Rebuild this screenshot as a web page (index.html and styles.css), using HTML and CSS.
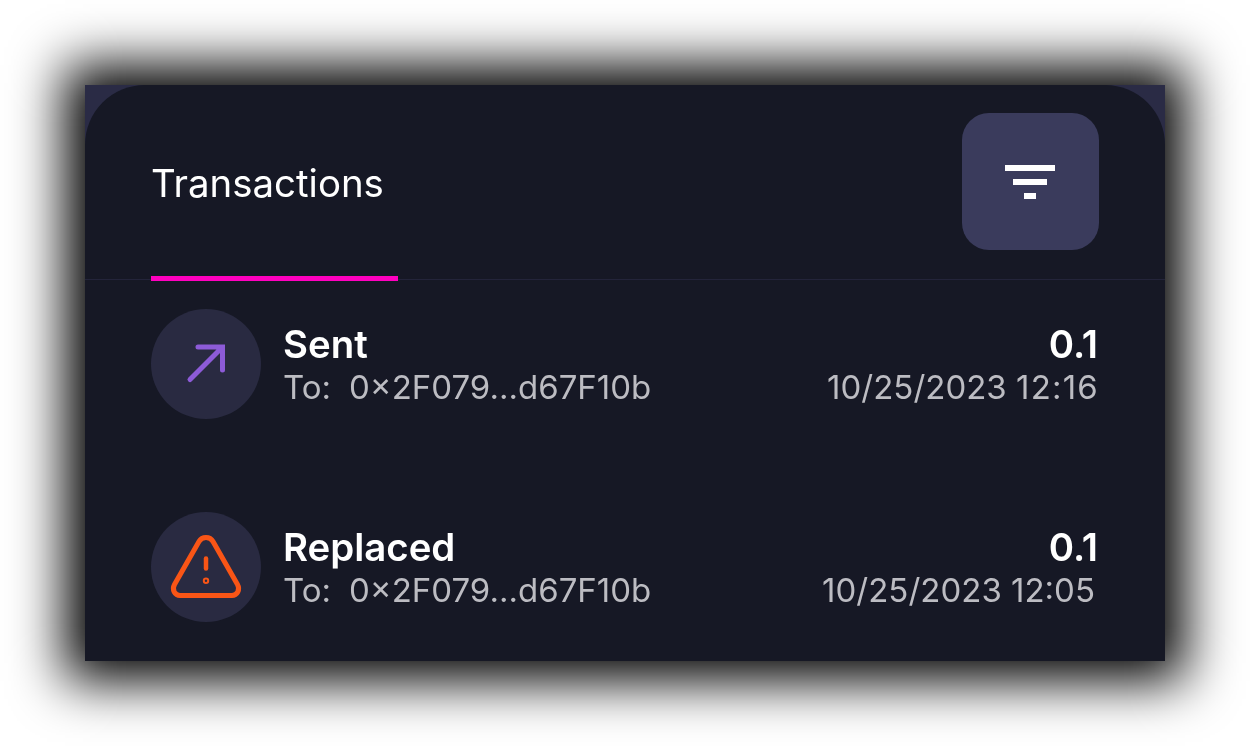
FILE: index.html
```html
<!DOCTYPE html>
<html lang="en">
<head>
<meta charset="utf-8">
<title>Transactions</title>
<link rel="stylesheet" href="styles.css">
</head>
<body>
<main class="frame">
  <section class="panel">
    <header class="head">
      <div class="tab"><span class="txt">Transactions</span></div>
      <button class="filter" type="button" aria-label="Filter">
        <svg width="50" height="34" viewBox="0 0 50 34"><path d="M0 0H50V6H0ZM8 14H42V20H8ZM19 28H31V34H19Z" fill="#fff"/></svg>
      </button>
    </header>
    <ul class="list">
      <li class="row">
        <span class="badge">
          <svg width="110" height="110" viewBox="0 0 110 110" fill="none" stroke="#8d5bd8" stroke-width="5" stroke-linecap="round"><path d="M39 70.500L71 38.500M47 38H71.500V61"/></svg>
        </span>
        <div class="info">
          <div class="title">Sent</div>
          <div class="sub"><span class="to">To:</span>0×2F079...d67F10b</div>
        </div>
        <div class="meta">
          <div class="title">0.1</div>
          <div class="sub">10/25/2023 <span class="time-wide">12:16</span></div>
        </div>
      </li>
      <li class="row">
        <span class="badge">
          <svg width="110" height="110" viewBox="0 0 110 110" fill="none" stroke="#f95516" stroke-width="5" stroke-linecap="round" stroke-linejoin="round"><path d="M48 29.500C51 24 59 24 62 29.500L86.500 72.500C89.500 78 86 83.500 81 83.500H29C24 83.500 20.500 78 23.500 72.500Z"/><path d="M55 46.500V56.500" stroke-width="4.500"/><circle cx="55" cy="68.700" r="2.200" stroke-width="2"/></svg>
        </span>
        <div class="info">
          <div class="title">Replaced</div>
          <div class="sub"><span class="to">To:</span>0×2F079...d67F10b</div>
        </div>
        <div class="meta meta-shift">
          <div class="title">0.1</div>
          <div class="sub">10/25/2023 12:05</div>
        </div>
      </li>
    </ul>
  </section>
</main>
</body>
</html>
```
FILE: styles.css
```css
* { box-sizing: border-box; }
html, body { margin: 0; height: 100%; background: #fff; overflow: hidden; }
body { padding: 85px; font-family: Inter, "Noto Sans", sans-serif; }
.frame {
  width: 1080px;
  height: 576px;
  background: #2a2b45;
  box-shadow: 0 0 50px 20px #000;
  overflow: hidden;
}
.panel {
  height: 100%;
  background: #161825;
  border-radius: 60px 60px 0 0;
}
.head {
  height: 195px;
  padding: 28px 66px 0;
  display: flex;
  justify-content: space-between;
  align-items: flex-start;
  border-bottom: 1px solid #23243a;
}
.tab {
  width: 247px;
  height: 139.500px;
  margin-top: 28px;
  font-size: 38.400px;
  line-height: 84px;
  color: #fff;
  border-bottom: 5.500px solid #ff00bf;
}
.txt, .title, .sub { will-change: opacity; }
.txt { display: inline-block; }
.filter {
  width: 137px;
  height: 137px;
  border: 0;
  padding: 0 1px 0 0;
  border-radius: 27px;
  background: #3a3b5c;
  display: flex;
  align-items: center;
  justify-content: center;
}
.list { list-style: none; margin: 29px 0 0; padding: 0 66px; }
.row { display: flex; height: 203px; align-items: flex-start; }
.badge {
  flex: none;
  width: 110px;
  height: 110px;
  border-radius: 50%;
  background: #292a41;
}
.badge svg { display: block; }
.info { flex: 1; margin-left: 22px; }
.meta { text-align: right; }
.meta .title { margin-right: 1px; }
.meta-shift .sub { margin-right: 4px; }
.title { font-size: 38.400px; font-weight: 600; line-height: 44px; margin: 13px 0 1px; color: #fff; }
.sub { font-size: 33px; line-height: 40px; color: #bcbcc2; white-space: nowrap; }
.time-wide { letter-spacing: 1.200px; }
.to { margin-right: 18px; }
```
